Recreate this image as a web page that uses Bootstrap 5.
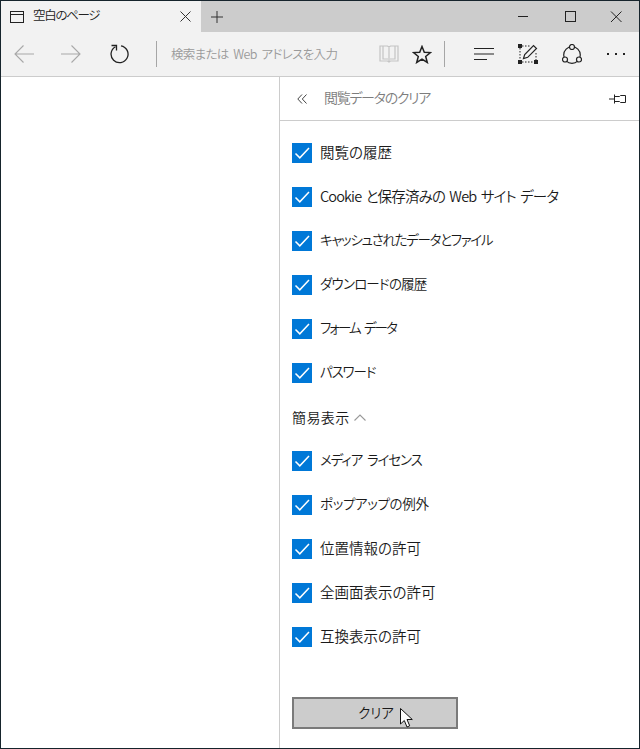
<!DOCTYPE html>
<html lang="ja">
<head>
<meta charset="utf-8">
<title>閲覧データのクリア</title>
<link href="https://cdn.jsdelivr.net/npm/bootstrap@5.3.0/dist/css/bootstrap.min.css" rel="stylesheet">
<style>
html,body{height:100%;margin:0;background:#fff}
body{font-family:"Noto Sans CJK JP","Liberation Sans",sans-serif;font-size:14px;font-weight:350;color:#1a1a1a;overflow:hidden;font-feature-settings:"palt"}
.win{width:640px;height:749px;border:1px solid #16242c;background:#fff}
.tabbar{height:31px;background:#ccc;flex:none}
.pagetab{width:200px;height:31px;background:#f2f2f2;padding:0 10px 0 9px;font-size:12.500px;color:#222}
.pagetab .ttl{margin-left:9px;letter-spacing:-1.3px;position:relative;top:-1px}
.newtab{margin-left:10px}
.wctl{margin-left:auto;width:150px}
.wctl svg{flex:1 1 0}
.toolbar{height:45px;background:#f2f2f2;border-bottom:1px solid #ccc;flex:none;position:relative}
.tbtn{flex:none}
.vsep{width:1px;height:26px;background:#a6a6a6;flex:none}
.addr{font-size:12.500px;letter-spacing:-.65px;word-spacing:2.500px;color:#9a9a9a;margin-left:14px;width:208px;white-space:nowrap}
.workarea{flex:1 1 0;min-height:0}
.blank{width:278px;flex:none}
.panel{flex:1 1 0;border-left:1px solid #ccc}
.phead{height:44px;border-bottom:1px solid #ccc;padding:0 13px 0 17px;flex:none}
.phead .ttl{font-size:14px;letter-spacing:-1.3px;color:#7d7d7d;margin-left:17px;position:relative;top:-1px}
.pbody{padding:21px 12px 0 12px}
.opt{height:22px;margin-bottom:22px;font-size:14.500px;white-space:nowrap}
.opt span{position:relative;top:-1px}
.opt .form-check-input{width:20px;height:20px;margin:0 8px 0 0;border-radius:0;border:0;flex:none;background-color:#0078d7;background-size:20px 20px;background-image:url("data:image/svg+xml,%3csvg xmlns='http://www.w3.org/2000/svg' viewBox='0 0 20 20'%3e%3cpath fill='none' stroke='%23fff' stroke-width='1.5' d='M3.5 10.5l4.3 4.3L17 5'/%3e%3c/svg%3e")}
.tx-cookie{letter-spacing:-.85px;word-spacing:2px}
.tx-kana1,.tx-kana2,.tx-kana3,.tx-kana4,.tx-form,.tx-media{font-size:13.500px}
.opt .tx-kana1,.opt .tx-kana2,.opt .tx-kana3,.opt .tx-kana4,.opt .tx-form,.opt .tx-media{top:-2px}
.tx-kana1{letter-spacing:-1.3px}
.tx-kana2{letter-spacing:-.8px}
.tx-kana3{letter-spacing:-1.1px}
.tx-kana4{letter-spacing:-.35px}
.tx-form{letter-spacing:-1.9px;word-spacing:3px}
.tx-media{letter-spacing:-1.1px;word-spacing:3px}
.grouphd{height:22px;margin:0 0 22px;font-size:14px;letter-spacing:.4px}
.grouphd svg{margin-left:4px}
.clearbtn{display:block;width:166px;height:32px;margin-top:49px;padding:0 0 2px;background:#ccc;border:2px solid #7a7a7a;border-radius:0;font-size:13.500px;letter-spacing:-2px;font-weight:350;color:#1a1a1a;position:relative}
.clearbtn:hover{background:#ccc;border-color:#7a7a7a}
.cursor{position:absolute;left:106px;top:9px}
</style>
</head>
<body>
<div class="win d-flex flex-column">
  <div class="tabbar d-flex align-items-center">
    <div class="pagetab d-flex align-items-center">
      <svg width="14" height="12" viewBox="0 0 14 12" fill="none" stroke="#222"><rect x=".5" y=".5" width="13" height="11"/><path d="M1 3.500h12"/></svg>
      <span class="ttl">空白のページ</span>
      <svg class="ms-auto" width="11" height="11" viewBox="0 0 11 11" fill="none" stroke="#333"><path d="M.5.5l10 10M10.500.5l-10 10"/></svg>
    </div>
    <svg class="newtab" width="12" height="12" viewBox="0 0 12 12" fill="none" stroke="#333"><path d="M6 0v12M0 6h12"/></svg>
    <div class="wctl d-flex align-items-center">
      <svg width="50" height="12" viewBox="0 0 50 12" fill="none" stroke="#222"><path d="M29 5.500h10"/></svg>
      <svg width="50" height="12" viewBox="0 0 50 12" fill="none" stroke="#222"><rect x="26.500" y=".5" width="10" height="10"/></svg>
      <svg width="50" height="12" viewBox="0 0 50 12" fill="none" stroke="#222"><path d="M22 .5l10.500 10.500M32.500 .5L22 11"/></svg>
    </div>
  </div>

  <div class="toolbar d-flex align-items-center">
    <svg class="tbtn" style="margin-left:13px" width="20" height="18" viewBox="0 0 20 18" fill="none" stroke="#a8a8a8" stroke-width="1.100"><path d="M20 9H1M9.500.5L1 9l8.500 8.500"/></svg>
    <svg class="tbtn" style="margin-left:27px" width="20" height="18" viewBox="0 0 20 18" fill="none" stroke="#a8a8a8" stroke-width="1.100"><path d="M0 9h19M10.500.5L19 9l-8.500 8.500"/></svg>
    <svg class="tbtn" style="margin-left:28px" width="20" height="20" viewBox="0 0 20 20" fill="none" stroke="#222" stroke-width="1.300"><path d="M6.500 2.700a8.500 8.500 0 1 0 5.500-.9"/><path d="M2.500 1.500h5v5"/></svg>
    <div class="vsep" style="margin-left:27px"></div>
    <div class="addr">検索または Web アドレスを入力</div>
    <svg class="tbtn" width="20" height="18" viewBox="0 0 20 18" fill="none" stroke="#c4c4c4" stroke-width="1.200"><path d="M1 1h7.500l1.500 1 1.500-1H19v15h-7.500L10 17l-1.500-1H1zM10 2v15"/><path d="M4 1v13h5M16 1v13h-5"/></svg>
    <svg class="tbtn" style="margin-left:13px" width="20" height="19" viewBox="0 0 20 19" fill="none" stroke="#222" stroke-width="1.500"><path d="M10 1.500l2.300 5.700 6.200.4-4.800 3.900 1.600 6-5.300-3.300-5.300 3.300 1.600-6L1.500 7.600l6.200-.4z"/></svg>
    <div class="vsep" style="margin-left:12px"></div>
    <svg class="tbtn" style="margin-left:29px" width="20" height="14" viewBox="0 0 20 14" fill="none" stroke="#222" stroke-width="1.200"><path d="M0 1.500h20M0 7h20M0 12.500h13"/></svg>
    <svg class="tbtn" style="margin-left:24px" width="20" height="20" viewBox="0 0 20 20" fill="none"><path d="M4 2h8M4 18h12M2 4v12M18 9v7" stroke="#222" stroke-dasharray="1.500 1.500"/><path d="M0 0h4v4H0zM0 16h4v4H0zM16 16h4v4h-4z" fill="#222"/><path d="M5.500 14.500l1.200-4L15.500 1.500l3 3-8.800 8.800z" stroke="#222" stroke-width="1.200"/></svg>
    <svg class="tbtn" style="margin-left:24px" width="20" height="20" viewBox="0 0 20 20" fill="none" stroke="#222" stroke-width="1.200"><circle cx="10" cy="11" r="8.300"/><circle cx="10" cy="3" r="2.500" fill="#f2f2f2"/><circle cx="3" cy="15.500" r="2.500" fill="#f2f2f2"/><circle cx="17" cy="15.500" r="2.500" fill="#f2f2f2"/></svg>
    <svg class="tbtn" style="margin-left:24px" width="20" height="4" viewBox="0 0 20 4" fill="#222"><rect x="1" y="1" width="2" height="2"/><rect x="9" y="1" width="2" height="2"/><rect x="17" y="1" width="2" height="2"/></svg>
  </div>

  <div class="workarea d-flex">
    <div class="blank"></div>
    <div class="panel d-flex flex-column">
      <div class="phead d-flex align-items-center">
        <svg width="10" height="10" viewBox="0 0 10 10" fill="none" stroke="#444"><path d="M5 .5L.8 5 5 9.500M9.500 .5L5.300 5l4.200 4.500"/></svg>
        <span class="ttl">閲覧データのクリア</span>
        <svg class="ms-auto" width="17" height="10" viewBox="0 0 17 10" fill="none" stroke="#222"><path d="M0 5h5.500M5.500 .5v9M5.500 2.500h5l1-1h5v7h-5l-1-1h-5"/></svg>
      </div>
      <div class="pbody">
        <label class="opt d-flex align-items-center"><input class="form-check-input" type="checkbox" checked><span>閲覧の履歴</span></label>
        <label class="opt d-flex align-items-center"><input class="form-check-input" type="checkbox" checked><span class="tx-cookie">Cookie と保存済みの Web サイト データ</span></label>
        <label class="opt d-flex align-items-center"><input class="form-check-input" type="checkbox" checked><span class="tx-kana1">キャッシュされたデータとファイル</span></label>
        <label class="opt d-flex align-items-center"><input class="form-check-input" type="checkbox" checked><span class="tx-kana2">ダウンロードの履歴</span></label>
        <label class="opt d-flex align-items-center"><input class="form-check-input" type="checkbox" checked><span class="tx-form">フォーム データ</span></label>
        <label class="opt d-flex align-items-center"><input class="form-check-input" type="checkbox" checked><span class="tx-kana3">パスワード</span></label>
        <div class="grouphd d-flex align-items-center"><span>簡易表示</span><svg width="12" height="7" viewBox="0 0 12 7" fill="none" stroke="#999" stroke-width="1.100"><path d="M.5 6.500L6 1l5.500 5.500"/></svg></div>
        <label class="opt d-flex align-items-center"><input class="form-check-input" type="checkbox" checked><span class="tx-media">メディア ライセンス</span></label>
        <label class="opt d-flex align-items-center"><input class="form-check-input" type="checkbox" checked><span class="tx-kana4">ポップアップの例外</span></label>
        <label class="opt d-flex align-items-center"><input class="form-check-input" type="checkbox" checked><span>位置情報の許可</span></label>
        <label class="opt d-flex align-items-center"><input class="form-check-input" type="checkbox" checked><span>全画面表示の許可</span></label>
        <label class="opt d-flex align-items-center"><input class="form-check-input" type="checkbox" checked><span>互換表示の許可</span></label>
        <button type="button" class="btn clearbtn">クリア
          <svg class="cursor" width="13" height="20" viewBox="0 0 13 20"><path d="M.5.5v15.500l3.800-3.500 2.700 6.500 2.700-1.200-2.700-6.300h5.300z" fill="#fff" stroke="#111"/></svg>
        </button>
      </div>
    </div>
  </div>
</div>
<script src="https://cdn.jsdelivr.net/npm/bootstrap@5.3.0/dist/js/bootstrap.bundle.min.js"></script>
</body>
</html>
